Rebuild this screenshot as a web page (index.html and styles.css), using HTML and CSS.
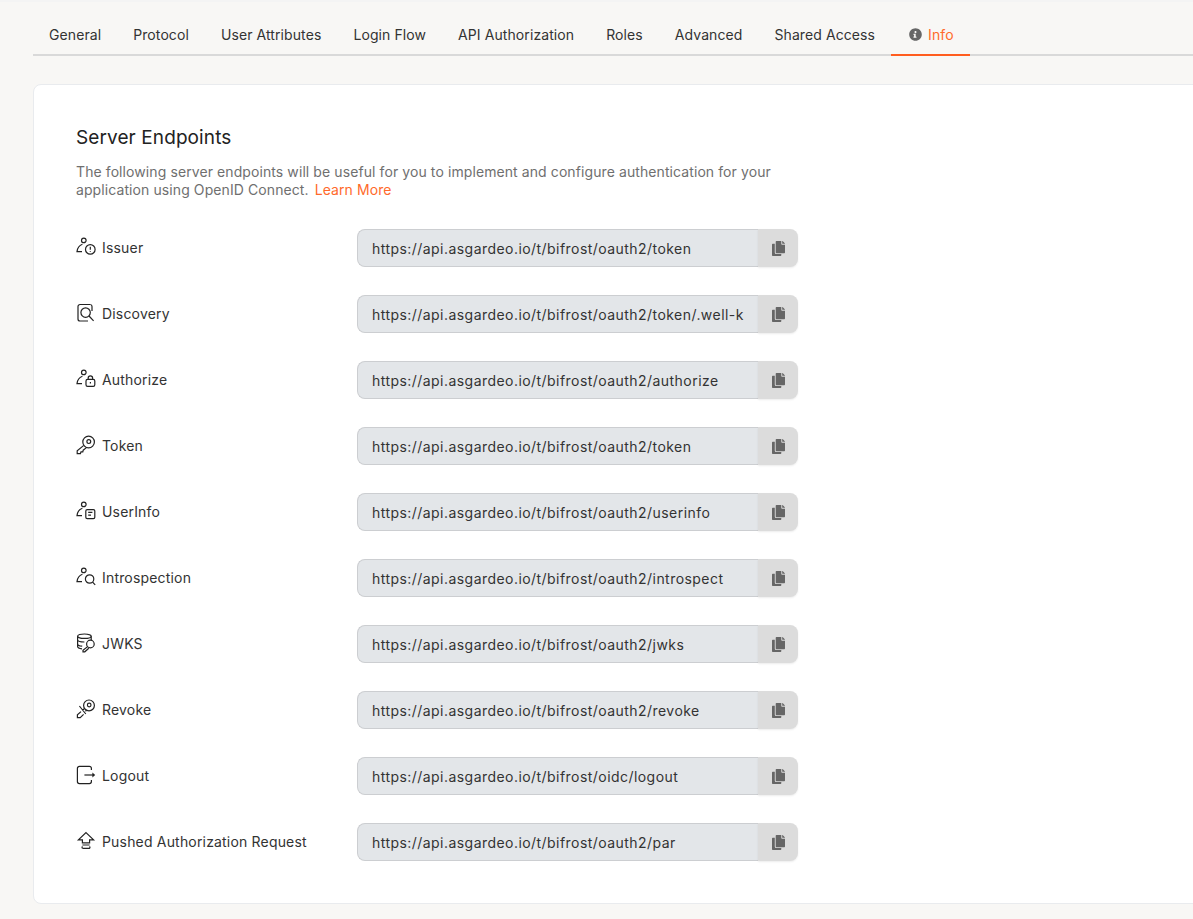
FILE: index.html
```html
<!DOCTYPE html>
<html lang="en">
  <head>
    <meta charset="UTF-8" />
    <meta name="viewport" content="width=device-width, initial-scale=1.0" />
    <link rel="stylesheet" href="styles.css">
    <title>Application Info</title>
  </head>
  <body>
    <svg class="sprites" aria-hidden="true">
      <symbol id="copy" viewBox="0 0 448 512">
        <path d="M320 448v40c0 13.255-10.745 24-24 24H24c-13.255 0-24-10.745-24-24V120c0-13.255 10.745-24 24-24h72v296c0 30.879 25.121 56 56 56h168zm0-344V0H152c-13.255 0-24 10.745-24 24v368c0 13.255 10.745 24 24 24h272c13.255 0 24-10.745 24-24V128H344c-13.2 0-24-10.8-24-24zm120.971-31.029L375.029 7.029A24 24 0 0 0 358.059 0H352v96h96v-6.059a24 24 0 0 0-7.029-16.97z"/>
      </symbol>
      <symbol id="person" viewBox="0 0 20 20">
        <circle cx="7.8" cy="3.4" r="2.3"/>
        <path d="M6.4 7.2C3.6 8.2 1.4 11 1 14.6H6"/>
      </symbol>
    </svg>

    <div class="tabs">
      <a class="tab">General</a>
      <a class="tab">Protocol</a>
      <a class="tab">User Attributes</a>
      <a class="tab">Login Flow</a>
      <a class="tab">API Authorization</a>
      <a class="tab">Roles</a>
      <a class="tab">Advanced</a>
      <a class="tab">Shared Access</a>
      <a class="tab active">
        <svg class="info-icon" viewBox="0 0 512 512"><path d="M256 8C119.043 8 8 119.083 8 256c0 136.997 111.043 248 248 248s248-111.003 248-248C504 119.083 392.957 8 256 8zm0 110c23.196 0 42 18.804 42 42s-18.804 42-42 42-42-18.804-42-42 18.804-42 42-42zm56 254c0 6.627-5.373 12-12 12h-112c-6.627 0-12-5.373-12-12v-24c0-6.627 5.373-12 12-12h12v-64h-12c-6.627 0-12-5.373-12-12v-24c0-6.627 5.373-12 12-12h64c6.627 0 12 5.373 12 12v100h12c6.627 0 12 5.373 12 12v24z"/></svg>
        Info
      </a>
    </div>

    <div class="card">
      <h2>Server Endpoints</h2>
      <p class="intro">
        The following server endpoints will be useful for you to implement and configure authentication for your
        application using OpenID Connect. <a class="link">Learn More</a>
      </p>

      <div class="endpoints">
        <div class="endpoint">
          <label>
            <svg class="icon" viewBox="0 0 20 20"><use href="#person"/><circle cx="14.3" cy="12.4" r="4.8"/><path d="M14.3 9.8v3M14.3 14.2v.8"/></svg>
            Issuer
          </label>
          <div class="copy-field">
            <input type="text" readonly value="https://api.asgardeo.io/t/bifrost/oauth2/token" />
            <button><svg><use href="#copy"/></svg></button>
          </div>
        </div>

        <div class="endpoint">
          <label>
            <svg class="icon" viewBox="0 0 20 20"><path d="M14.5 1.5H4A2 2 0 0 0 2 3.5V16a2 2 0 0 0 2 2h8"/><path d="M14.5 1.5a2 2 0 0 1 1.5 2V8"/><circle cx="9.6" cy="9.6" r="4.7"/><path d="M13 13l4.6 4.8"/></svg>
            Discovery
          </label>
          <div class="copy-field">
            <input type="text" readonly value="https://api.asgardeo.io/t/bifrost/oauth2/token/.well-known/openid-configuration" />
            <button><svg><use href="#copy"/></svg></button>
          </div>
        </div>

        <div class="endpoint">
          <label>
            <svg class="icon" viewBox="0 0 20 20"><use href="#person"/><rect x="10" y="10.4" width="8.8" height="7" rx="1.6"/><path d="M12.2 10.4V9a2.2 2.2 0 0 1 4.4 0v1.4M14.4 13v1.6"/></svg>
            Authorize
          </label>
          <div class="copy-field">
            <input type="text" readonly value="https://api.asgardeo.io/t/bifrost/oauth2/authorize" />
            <button><svg><use href="#copy"/></svg></button>
          </div>
        </div>

        <div class="endpoint">
          <label>
            <svg class="icon" viewBox="0 0 20 20"><circle cx="12.6" cy="7" r="5.8"/><circle cx="12.8" cy="6.6" r="1.9"/><path d="M7.8 10.4L1.2 15.8v2.8h3.2l.6-1.8h1.8l.4-1.6 3.2-2.6"/></svg>
            Token
          </label>
          <div class="copy-field">
            <input type="text" readonly value="https://api.asgardeo.io/t/bifrost/oauth2/token" />
            <button><svg><use href="#copy"/></svg></button>
          </div>
        </div>

        <div class="endpoint">
          <label>
            <svg class="icon" viewBox="0 0 20 20"><use href="#person"/><rect x="9.8" y="8.6" width="9" height="9" rx="1.4"/><path d="M12.2 11.4h4.2M12.2 14.2h2.8"/></svg>
            UserInfo
          </label>
          <div class="copy-field">
            <input type="text" readonly value="https://api.asgardeo.io/t/bifrost/oauth2/userinfo" />
            <button><svg><use href="#copy"/></svg></button>
          </div>
        </div>

        <div class="endpoint">
          <label>
            <svg class="icon" viewBox="0 0 20 20"><use href="#person"/><circle cx="13.6" cy="12" r="4.2"/><path d="M16.6 15.2l2.6 2.6"/></svg>
            Introspection
          </label>
          <div class="copy-field">
            <input type="text" readonly value="https://api.asgardeo.io/t/bifrost/oauth2/introspect" />
            <button><svg><use href="#copy"/></svg></button>
          </div>
        </div>

        <div class="endpoint">
          <label>
            <svg class="icon" viewBox="0 0 20 20"><ellipse cx="8.4" cy="3.2" rx="6.8" ry="2.2"/><path d="M1.6 3.2v10.4c0 1.2 2 2 4.4 2.2M15.2 3.2v4M1.6 6.8c0 1.3 3 2.2 6.8 2.2M1.6 11c0 1.2 2 2 4.6 2.2"/><circle cx="14.4" cy="11" r="3.8"/><path d="M11.6 13.6l-4.6 3.8v1.4h1.8l4-3.6"/></svg>
            JWKS
          </label>
          <div class="copy-field">
            <input type="text" readonly value="https://api.asgardeo.io/t/bifrost/oauth2/jwks" />
            <button><svg><use href="#copy"/></svg></button>
          </div>
        </div>

        <div class="endpoint">
          <label>
            <svg class="icon" viewBox="0 0 20 20"><circle cx="13" cy="6.4" r="5.4"/><circle cx="13.2" cy="6" r="1.8"/><path d="M8.2 9.8L6.6 11.2M5 12.6l-3.6 3.2v2.8h2.8l3.4-3.2M9.4 12.2l1.2-1M3.4 7l6.4 8"/></svg>
            Revoke
          </label>
          <div class="copy-field">
            <input type="text" readonly value="https://api.asgardeo.io/t/bifrost/oauth2/revoke" />
            <button><svg><use href="#copy"/></svg></button>
          </div>
        </div>

        <div class="endpoint">
          <label>
            <svg class="icon" viewBox="0 0 20 20"><path d="M15.4 5V3.4a2 2 0 0 0-2-2H3.4a2 2 0 0 0-2 2v13.2a2 2 0 0 0 2 2h10a2 2 0 0 0 2-2V15"/><path d="M8.4 10h9.4"/><path class="solid" d="M16.4 7.6l2.8 2.4-2.8 2.4z"/></svg>
            Logout
          </label>
          <div class="copy-field">
            <input type="text" readonly value="https://api.asgardeo.io/t/bifrost/oidc/logout" />
            <button><svg><use href="#copy"/></svg></button>
          </div>
        </div>

        <div class="endpoint">
          <label>
            <svg class="icon" viewBox="0 0 20 20"><path d="M10 1.6l7.6 7.2h-4v3H6.4v-3h-4z"/><path d="M6.4 14h7.2M6.6 17.4h6.8a1 1 0 0 0 0-1.8"/><path d="M6.6 15.6a1 1 0 0 0 0 1.8"/></svg>
            Pushed Authorization Request
          </label>
          <div class="copy-field">
            <input type="text" readonly value="https://api.asgardeo.io/t/bifrost/oauth2/par" />
            <button><svg><use href="#copy"/></svg></button>
          </div>
        </div>
      </div>
    </div>
  </body>
</html>
```

FILE: styles.css
```css
html {
  overflow: hidden;
}

body {
  margin: 0;
  height: 919px;
  overflow: hidden;
  background-color: #f8f7f5;
  border-top: 2px solid #f4f4f4;
  box-sizing: border-box;
  padding-left: 33px;
  font-family: "Inter", "Liberation Sans", sans-serif;
  font-size: 14px;
  color: #333;
}

.sprites {
  display: none;
}

.tabs {
  display: flex;
  height: 54px;
  box-sizing: border-box;
  padding-top: 18px;
  border-bottom: 2px solid #d9d9d9;
}

.tab {
  display: flex;
  align-items: flex-start;
  height: 34px;
  box-sizing: border-box;
  padding: 5px 16px 0;
  line-height: 20px;
  letter-spacing: 0.09px;
  color: #333;
  white-space: nowrap;
}

.tab.active {
  color: #ff6a2b;
  border-bottom: 2px solid #ff5d1f;
  height: 36px;
}

.info-icon {
  width: 13px;
  height: 13px;
  margin: 3px 6px 0 2px;
  fill: #666;
}

.card {
  margin-top: 28px;
  margin-right: -20px;
  height: 820px;
  box-sizing: border-box;
  padding: 41px 0 0 42px;
  background-color: #fff;
  border: 1px solid #e9ebee;
  border-radius: 8px;
}

h2 {
  margin: 0;
  font-size: 19px;
  font-weight: 400;
  line-height: 24px;
  letter-spacing: 0.1px;
  color: #222;
}

.intro {
  width: 705px;
  margin: 13px 0 0;
  line-height: 18px;
  letter-spacing: 0.09px;
  color: #6f6f6f;
}

.link {
  margin-left: 2px;
  color: #ff6a2b;
}

.endpoints {
  display: flex;
  flex-direction: column;
  gap: 28px;
  margin-top: 30px;
}

.endpoint {
  display: grid;
  grid-template-columns: 281px 441px;
  align-items: center;
  height: 38px;
}

label {
  display: flex;
  align-items: center;
  gap: 6px;
  margin-top: -2px;
  letter-spacing: 0.18px;
}

.icon {
  width: 20px;
  height: 20px;
  fill: none;
  stroke: #222;
  stroke-width: 1.2;
}

.icon .solid {
  fill: #222;
  stroke: none;
}

.copy-field {
  display: flex;
  height: 38px;
}

input {
  flex: 1;
  min-width: 0;
  box-sizing: border-box;
  padding: 0 14px;
  font: inherit;
  letter-spacing: 0.45px;
  color: #333;
  background-color: #e3e6e9;
  border: 1px solid #ccced1;
  border-right: 0;
  border-radius: 8px 0 0 8px;
  outline: none;
}

button {
  width: 40px;
  padding: 0;
  background-color: #dcdcdc;
  border: 0;
  border-radius: 0 8px 8px 0;
  box-shadow: 0 1px 2px rgba(0, 0, 0, 0.08);
  display: flex;
  align-items: center;
  justify-content: center;
}

button svg {
  width: 13px;
  height: 15px;
  fill: #666;
}
```
